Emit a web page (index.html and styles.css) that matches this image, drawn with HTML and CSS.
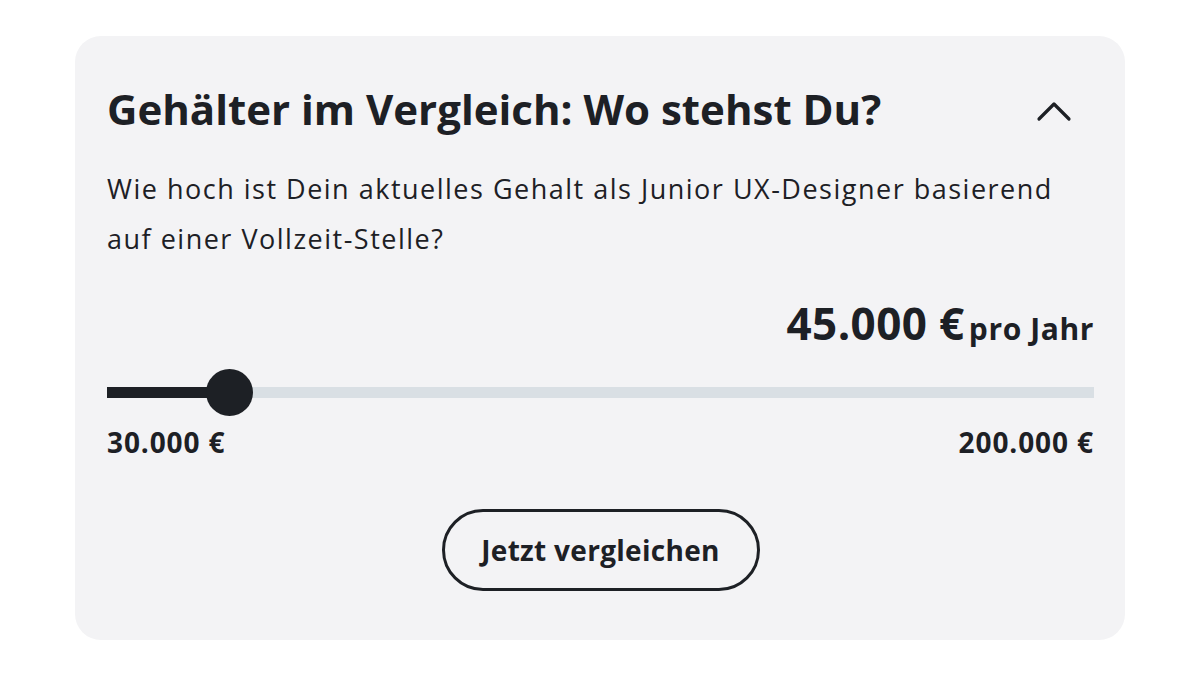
FILE: index.html
```html
<!DOCTYPE html>
<html lang="de">
<head>
<meta charset="utf-8">
<title>Gehälter im Vergleich</title>
<link rel="stylesheet" href="styles.css">
</head>
<body>
<section class="card">
  <header class="card-head">
    <h2 class="title">Gehälter im Vergleich: Wo stehst Du?</h2>
    <button class="toggle" aria-label="Einklappen">
      <svg width="36" height="22" viewBox="0 0 36 22"><path d="M3 19 L18 4 L33 19" fill="none" stroke="#1d2025" stroke-width="3.2" stroke-linecap="round" stroke-linejoin="round"/></svg>
    </button>
  </header>
  <p class="question">Wie hoch ist Dein aktuelles Gehalt als Junior UX-Designer basierend auf einer Vollzeit-Stelle?</p>
  <div class="value"><span class="amount">45.000 €</span> <span class="unit">pro Jahr</span></div>
  <div class="slider">
    <div class="track"><div class="fill" style="width:122px"></div><div class="thumb" style="left:122px"></div></div>
  </div>
  <div class="range"><span>30.000 €</span><span>200.000 €</span></div>
  <div class="actions"><button class="btn">Jetzt vergleichen</button></div>
</section>
</body>
</html>
```
FILE: styles.css
```css
* { box-sizing: border-box; }
html, body { margin: 0; padding: 0; background: #ffffff; }
body {
  font-family: "Open Sans", "Noto Sans", sans-serif;
  color: #1d2025;
  width: 1200px;
  height: 675px;
  padding: 36px 75px 0 75px;
}
.card {
  background: #f3f3f5;
  border-radius: 26px;
  height: 604px;
  padding: 0 31px 0 32px;
  display: flex;
  flex-direction: column;
}
.card-head {
  display: flex;
  align-items: center;
  justify-content: space-between;
  padding-top: 76px;
}
.title {
  margin: 0;
  font-size: 42px;
  font-weight: 700;
  letter-spacing: 0;
  line-height: 52px;
  margin-top: -29px;
}
.toggle {
  background: none;
  border: 0;
  padding: 0;
  margin: -26px 22px 0 0;
  display: flex;
}
.question {
  margin: 29px 0 0 0;
  font-size: 27px;
  line-height: 50px;
  letter-spacing: 1.5px;
  max-width: 975px;
}
.value {
  margin-top: 36px;
  text-align: right;
  line-height: 46px;
}
.amount { font-size: 44px; font-weight: 700; letter-spacing: 0.4px; }
.unit { font-size: 30px; font-weight: 700; letter-spacing: 0.6px; }
.slider { margin-top: 30px; padding: 0; }
.track {
  position: relative;
  height: 11px;
  background: #d9dfe4;
}
.fill {
  position: absolute;
  left: 0; top: 0; bottom: 0;
  background: #1d2025;
}
.thumb {
  position: absolute;
  top: 50%;
  width: 47px;
  height: 47px;
  margin: -23.5px 0 0 -23.5px;
  border-radius: 50%;
  background: #1d2025;
}
.range {
  display: flex;
  justify-content: space-between;
  margin-top: 29px;
  font-size: 28px;
  font-weight: 700;
  letter-spacing: 0.9px;
  line-height: 30px;
}
.actions {
  display: flex;
  justify-content: center;
  margin-top: 52px;
}
.btn {
  font-family: inherit;
  background: transparent;
  color: #1d2025;
  border: 3px solid #1d2025;
  border-radius: 41px;
  width: 318px;
  height: 82px;
  font-size: 28px;
  font-weight: 700;
  letter-spacing: 0.3px;
}
```
